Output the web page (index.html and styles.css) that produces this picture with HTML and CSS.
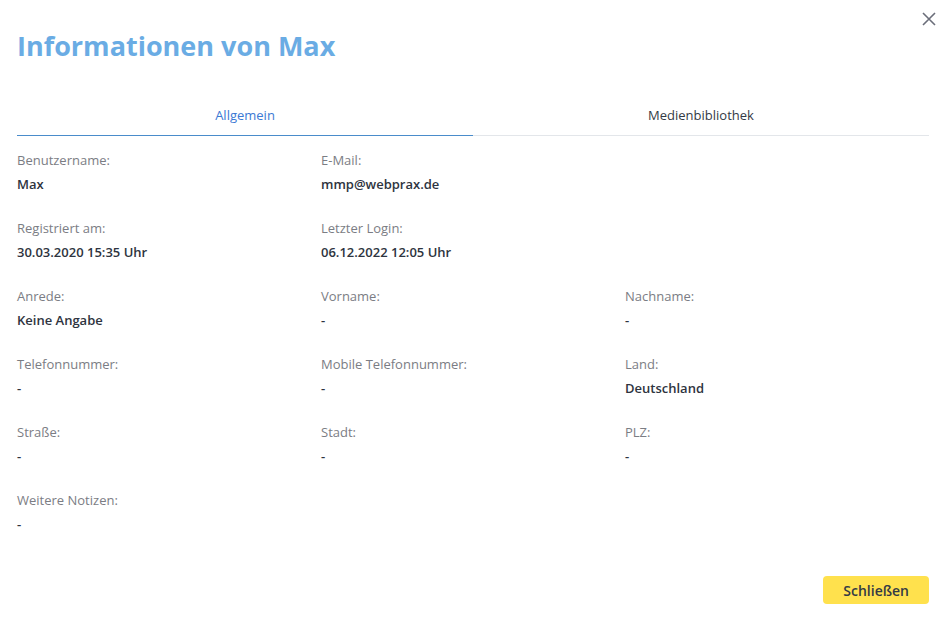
FILE: index.html
```html
<!DOCTYPE html>
<html lang="de">
<head>
  <meta charset="UTF-8" />
  <title>Informationen von Max</title>
  <link rel="stylesheet" href="styles.css">
</head>
<body>
  <div class="modal">
    <button class="close" aria-label="Schließen">
      <svg width="16" height="16" viewBox="0 0 16 16"><path d="M2 2 L14 14 M14 2 L2 14" stroke="#6b6e7a" stroke-width="1.6" fill="none"/></svg>
    </button>
    <h1>Informationen von Max</h1>

    <div class="tabs">
      <div class="tab active">Allgemein</div>
      <div class="tab">Medienbibliothek</div>
    </div>

    <div class="info-grid">
      <div class="field">
        <div class="label">Benutzername:</div>
        <div class="value">Max</div>
      </div>
      <div class="field">
        <div class="label">E-Mail:</div>
        <div class="value">mmp@webprax.de</div>
      </div>
      <div class="field empty"></div>

      <div class="field">
        <div class="label">Registriert am:</div>
        <div class="value">30.03.2020 15:35 Uhr</div>
      </div>
      <div class="field">
        <div class="label">Letzter Login:</div>
        <div class="value">06.12.2022 12:05 Uhr</div>
      </div>
      <div class="field empty"></div>

      <div class="field">
        <div class="label">Anrede:</div>
        <div class="value">Keine Angabe</div>
      </div>
      <div class="field">
        <div class="label">Vorname:</div>
        <div class="value">-</div>
      </div>
      <div class="field">
        <div class="label">Nachname:</div>
        <div class="value">-</div>
      </div>

      <div class="field">
        <div class="label">Telefonnummer:</div>
        <div class="value">-</div>
      </div>
      <div class="field">
        <div class="label">Mobile Telefonnummer:</div>
        <div class="value">-</div>
      </div>
      <div class="field">
        <div class="label">Land:</div>
        <div class="value">Deutschland</div>
      </div>

      <div class="field">
        <div class="label">Straße:</div>
        <div class="value">-</div>
      </div>
      <div class="field">
        <div class="label">Stadt:</div>
        <div class="value">-</div>
      </div>
      <div class="field">
        <div class="label">PLZ:</div>
        <div class="value">-</div>
      </div>

      <div class="field">
        <div class="label">Weitere Notizen:</div>
        <div class="value">-</div>
      </div>
    </div>

    <div class="footer">
      <button class="btn-close">Schließen</button>
    </div>
  </div>
</body>
</html>
```

FILE: styles.css
```css
body {
  margin: 0;
  background: #ffffff;
  font-family: "Open Sans", sans-serif;
}

.modal {
  position: relative;
  padding: 26px 13px 15px 17px;
}

.close {
  position: absolute;
  top: 11px;
  right: 5px;
  background: none;
  border: none;
  padding: 0;
  cursor: pointer;
}

h1 {
  margin: 0;
  font-size: 27px;
  font-weight: 700;
  color: #6aace4;
  line-height: 40px;
}

.tabs {
  display: flex;
  margin-top: 40px;
  border-bottom: 1px solid #e3e6ea;
}

.tab {
  flex: 1;
  text-align: center;
  font-size: 13px;
  color: #333a45;
  padding: 0 0 11px;
  line-height: 18px;
  margin-bottom: -1px;
  border-bottom: 1px solid transparent;
}

.tab.active {
  color: #3b79d4;
  border-bottom-color: #4a8ccb;
}

.info-grid {
  display: grid;
  grid-template-columns: repeat(3, 1fr);
  row-gap: 26px;
  margin-top: 15px;
  font-size: 13px;
}

.label {
  color: #7b7d84;
  line-height: 18px;
  margin-bottom: 6px;
}

.value {
  color: #2e3440;
  font-weight: 600;
  line-height: 18px;
}

.footer {
  display: flex;
  justify-content: flex-end;
  margin-top: 43px;
}

.btn-close {
  background: #ffe14d;
  border: none;
  border-radius: 4px;
  padding: 0 20px;
  height: 28px;
  font-family: inherit;
  font-size: 14px;
  font-weight: 600;
  color: #333a45;
  cursor: pointer;
}
```
